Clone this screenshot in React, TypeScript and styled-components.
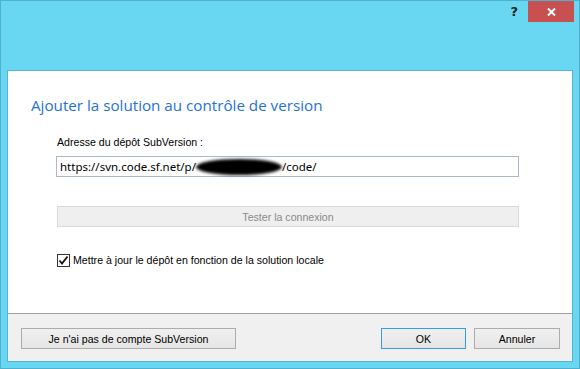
import React from 'react'
import styled, { createGlobalStyle } from 'styled-components'

const GlobalStyle = createGlobalStyle`
  html, body {
    margin: 0;
    padding: 0;
    background: #ffffff;
  }
  * {
    box-sizing: border-box;
  }
`

const Window = styled.div`
  width: 580px;
  height: 369px;
  border: 1px solid #4fb0cf;
  background: #6ad7f2;
  display: flex;
  flex-direction: column;
  font-family: 'Liberation Sans', Arial, sans-serif;
`

const TitleBar = styled.div`
  height: 69px;
  display: flex;
  justify-content: flex-end;
  align-items: flex-start;
  padding-right: 5px;
`

const HelpGlyph = styled.div`
  margin-top: 3px;
  margin-right: 10px;
  font-family: 'DejaVu Sans', sans-serif;
  font-weight: bold;
  font-size: 13px;
  line-height: 15px;
  color: #222222;
`

const CloseButton = styled.div`
  width: 46px;
  height: 21px;
  background: #c75050;
  display: flex;
  align-items: center;
  justify-content: center;
`

const Panel = styled.div`
  flex: 1;
  margin: 0 6px 6px 6px;
  border: 1px solid #55b5d2;
  display: flex;
  flex-direction: column;
  background: #ffffff;
`

const Content = styled.div`
  flex: 1;
  padding: 24px 53px 0 23px;
  display: flex;
  flex-direction: column;
`

const Heading = styled.div`
  font-family: 'Open Sans', sans-serif;
  font-size: 15.2px;
  line-height: 20px;
  color: #2671d6;
  white-space: nowrap;
`

const Form = styled.div`
  padding-left: 25px;
  display: flex;
  flex-direction: column;
`

const Label = styled.div`
  margin-top: 21px;
  font-size: 10.6px;
  line-height: 13px;
  color: #000000;
  padding-left: 1px;
`

const TextBox = styled.div`
  margin-top: 7px;
  height: 21px;
  border: 1px solid #abb9c9;
  padding: 0 3px;
  display: flex;
  align-items: center;
  font-family: 'Noto Sans', sans-serif;
  font-size: 11.5px;
  color: #000000;
  white-space: nowrap;
`

const Redacted = styled.span`
  display: inline-block;
  width: 86px;
  height: 16px;
  background: #000000;
  border-radius: 50%;
  filter: blur(1.5px);
`

const WideButton = styled.div`
  margin-top: 29px;
  margin-left: 1px;
  height: 21px;
  border: 1px solid #d9d9d9;
  background: #efefef;
  color: #8a8a8a;
  font-size: 10.6px;
  display: flex;
  align-items: center;
  justify-content: center;
`

const CheckRow = styled.div`
  margin-top: 27px;
  margin-left: 1px;
  display: flex;
  align-items: center;
  gap: 3px;
  font-size: 10.6px;
  line-height: 13px;
  color: #000000;
`

const CheckBox = styled.div`
  width: 13px;
  height: 13px;
  border: 1px solid #333333;
  background: #ffffff;
  display: flex;
  align-items: center;
  justify-content: center;
`

const Footer = styled.div`
  height: 48px;
  border-top: 1px solid #a0a0a0;
  background: #f0f0f0;
  padding: 14px 12px 0 13px;
  display: flex;
  align-items: flex-start;
  gap: 8px;
`

const Button = styled.div<{ width: number; focused?: boolean }>`
  width: ${({ width }) => width}px;
  height: 21px;
  border: 1px solid ${({ focused }) => (focused ? '#3399ff' : '#acacac')};
  background: linear-gradient(#f0f0f0, #e5e5e5);
  font-size: 10.6px;
  color: #000000;
  display: flex;
  align-items: center;
  justify-content: center;
`

const Spacer = styled.div`
  flex: 1;
`

const App = () => {
  return (
    <>
      <GlobalStyle />
      <Window>
        <TitleBar>
          <HelpGlyph>?</HelpGlyph>
          <CloseButton>
            <svg width="9" height="8" viewBox="0 0 9 8">
              <path d="M1 0.5 L8 7.5 M8 0.5 L1 7.5" stroke="#ffffff" strokeWidth="2" />
            </svg>
          </CloseButton>
        </TitleBar>
        <Panel>
          <Content>
            <Heading>Ajouter la solution au contrôle de version</Heading>
            <Form>
              <Label>Adresse du dépôt SubVersion :</Label>
              <TextBox>
                https://svn.code.sf.net/p/
                <Redacted />
                /code/
              </TextBox>
              <WideButton>Tester la connexion</WideButton>
              <CheckRow>
                <CheckBox>
                  <svg width="11" height="11" viewBox="0 0 11 11">
                    <path d="M1.5 5.5 L4 8.5 L9.5 1.5" fill="none" stroke="#111111" strokeWidth="1.8" />
                  </svg>
                </CheckBox>
                Mettre à jour le dépôt en fonction de la solution locale
              </CheckRow>
            </Form>
          </Content>
          <Footer>
            <Button width={215}>Je n'ai pas de compte SubVersion</Button>
            <Spacer />
            <Button width={85} focused>OK</Button>
            <Button width={86}>Annuler</Button>
          </Footer>
        </Panel>
      </Window>
    </>
  )
}

export default App
